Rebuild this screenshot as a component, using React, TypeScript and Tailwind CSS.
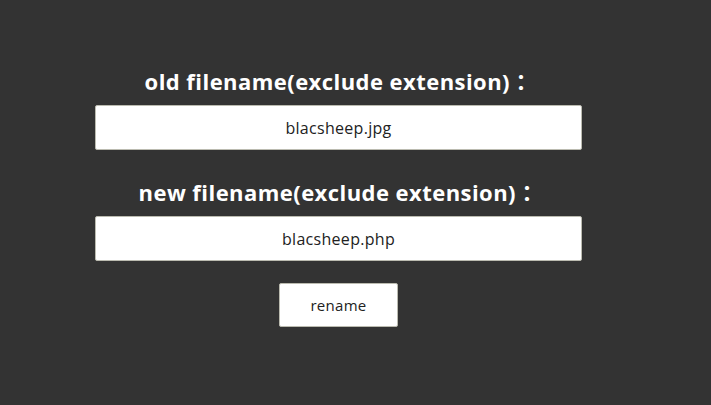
import React from "react";

export default function App() {
  return (
    <div className="w-[711px] h-[405px] bg-[#333333] overflow-hidden" style={{ fontFamily: "'Open Sans', 'Noto Sans CJK TC', sans-serif" }}>
      <div className="ml-[95px] w-[487px] pt-[66px] flex flex-col items-center">
        <div className="h-[30px] flex items-center text-white font-bold text-[22px] tracking-[0.45px] leading-none">old filename(exclude extension)：</div>
        <input
          readOnly
          value="blacsheep.jpg"
          className="mt-[9px] w-[487px] h-[45px] bg-white border border-[#bbbbb0] rounded-[2px] text-center text-[16px] tracking-[0.3px] text-[#222] outline-none"
        />
        <div className="mt-[27px] h-[30px] flex items-center text-white font-bold text-[22px] tracking-[0.45px] leading-none">new filename(exclude extension)：</div>
        <input
          readOnly
          value="blacsheep.php"
          className="mt-[9px] w-[487px] h-[45px] bg-white border border-[#bbbbb0] rounded-[2px] text-center text-[16px] tracking-[0.3px] text-[#222] outline-none"
        />
        <button className="mt-[22px] w-[119px] h-[44px] bg-white border border-[#bbbbb0] rounded-[2px] text-[15px] tracking-[0.3px] text-[#222]">rename</button>
      </div>
    </div>
  );
}
